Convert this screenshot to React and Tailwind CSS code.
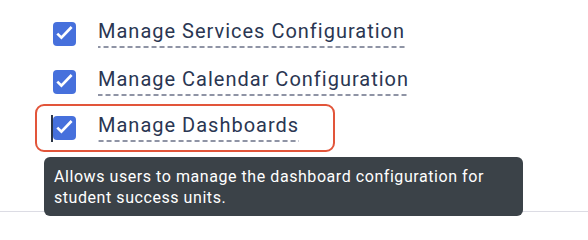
const font = { fontFamily: 'Roboto, "Liberation Sans", sans-serif' }

function Box({ caret }) {
  return (
    <div className="flex items-center">
      {caret && <span className="block w-[2px] h-[27px] bg-[#2b3548] -ml-[2px]" />}
      <span className="block w-[23px] h-[24px] rounded-[4px] bg-[#4670dc]">
        <svg width="23" height="24" viewBox="0 0 23 24" fill="none">
          <path d="M4.3 11.6 8.4 15.6 18.6 5" stroke="white" strokeWidth="2.7" />
        </svg>
      </span>
    </div>
  )
}

function Label({ children }) {
  return (
    <span className="inline-block text-[20px] leading-[22px] pb-[6px] text-[#2a3652] tracking-[1px] bg-[linear-gradient(to_right,#8f94a5_5px,transparent_5px)] bg-[length:8px_2px] bg-repeat-x bg-bottom">
      {children}
    </span>
  )
}

export default function App() {
  return (
    <div className="relative w-[588px] h-[228px] bg-white overflow-hidden" style={font}>
      <div className="pt-[10px]">
        <div className="flex items-center gap-[22px] h-[48px] pl-[53px]">
          <Box />
          <Label>Manage Services Configuration</Label>
        </div>
        <div className="flex items-center gap-[22px] h-[48px] pl-[53px]">
          <Box />
          <Label>Manage Calendar Configuration</Label>
        </div>
        <div className="-mt-[2px] ml-[35px] w-[300px] h-[48px] border-2 border-[#e2553a] rounded-[9px] flex items-center gap-[22px] pl-[16px]">
          <Box caret />
          <Label>Manage Dashboards</Label>
        </div>
      </div>
      <div className="mt-[59px] border-t border-[#dcdce4]" />
      <div className="absolute left-[44px] top-[157px] w-[479px] rounded-[6px] bg-[#3b4248] px-[10px] py-[8.5px] text-[16px] leading-[21px] tracking-[0.56px] text-white">
        Allows users to manage the dashboard configuration for student success units.
      </div>
    </div>
  )
}
